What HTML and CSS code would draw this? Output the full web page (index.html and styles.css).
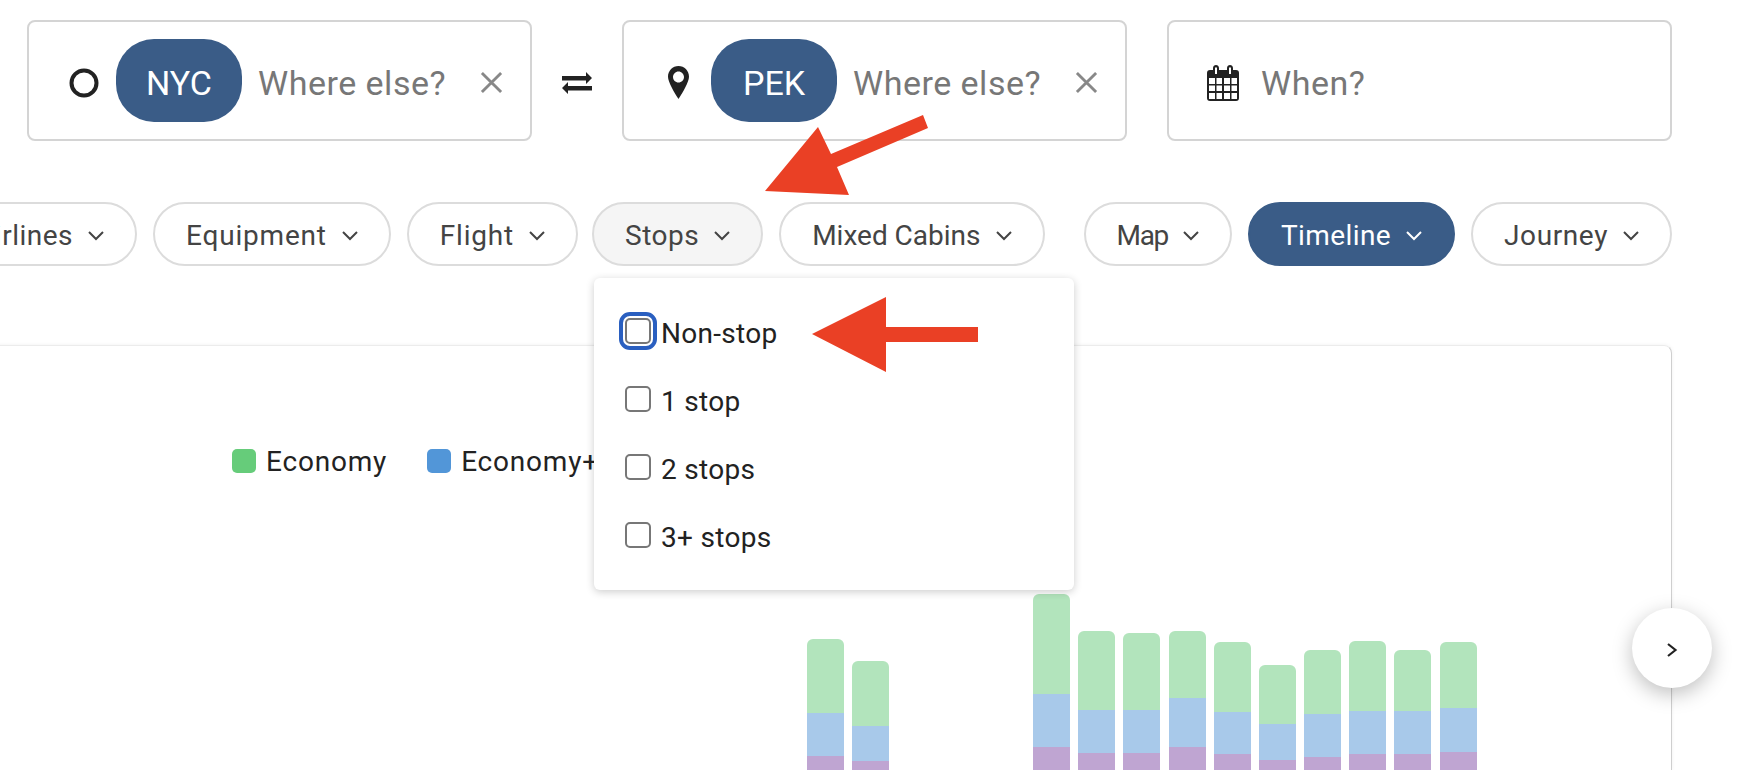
FILE: index.html
```html
<!DOCTYPE html>
<html lang="en">
<head>
    <meta charset="UTF-8">
    <title>Flight search</title>
    <link rel="stylesheet" href="styles.css">
</head>
<body>
    <div class="search-row">
        <div class="search-box">
            <svg class="icon-origin" viewBox="0 0 30 30"><circle cx="15" cy="15" r="12.5" fill="none" stroke="#222" stroke-width="4"/></svg>
            <span class="code-pill">NYC</span>
            <span class="placeholder">Where else?</span>
            <svg class="icon-close" viewBox="0 0 24 24"><path d="M2 2L22 22M22 2L2 22" stroke="#888" stroke-width="3" fill="none"/></svg>
        </div>
        <svg class="icon-swap" viewBox="0 0 30 24"><path d="M0 5H24V1L30 7L24 13V9.500H0ZM30 15H6V11L0 17L6 23V19.500H30Z" fill="#222"/></svg>
        <div class="search-box search-box-dest">
            <svg class="icon-pin" viewBox="0 0 21 33"><path fill-rule="evenodd" d="M10.500 0C4.700 0 0 4.700 0 10.700C0 15.800 6.500 27 10.500 33C14.500 27 21 15.800 21 10.700C21 4.700 16.300 0 10.500 0ZM10.500 5.500C13.500 5.500 16 8 16 11C16 14 13.500 16.500 10.500 16.500C7.500 16.500 5 14 5 11C5 8 7.500 5.500 10.500 5.500Z" fill="#222"/></svg>
            <span class="code-pill">PEK</span>
            <span class="placeholder">Where else?</span>
            <svg class="icon-close" viewBox="0 0 24 24"><path d="M2 2L22 22M22 2L2 22" stroke="#888" stroke-width="3" fill="none"/></svg>
        </div>
        <div class="search-box search-box-date">
            <svg class="icon-calendar" viewBox="0 0 32 36"><path fill-rule="evenodd" d="M6 3C6 1 7.500 0 9 0C10.500 0 12 1 12 3V5H20V3C20 1 21.500 0 23 0C24.500 0 26 1 26 3V5H29C31 5 32 6 32 8V33C32 35 31 36 29 36H3C1 36 0 35 0 33V8C0 6 1 5 3 5H6ZM8 2.500V9H10V2.500ZM22 2.500V9H24V2.500ZM2 13V19H8V13ZM9.500 13V19H15V13ZM17 13V19H23V13ZM24.500 13V19H30V13ZM2 20.500V26H8V20.500ZM9.500 20.500V26H15V20.500ZM17 20.500V26H23V20.500ZM24.500 20.500V26H30V20.500ZM2 28V34H8V28ZM9.500 28V34H15V28ZM17 28V34H23V28ZM24.500 28V34H30V28Z" fill="#222"/></svg>
            <span class="placeholder">When?</span>
        </div>
    </div>

    <div class="filter-row">
        <button class="filter-pill">Airlines <svg class="chevron" viewBox="0 0 18 11"><path d="M2 2L9 9L16 2" fill="none" stroke="currentColor" stroke-width="2"/></svg></button>
        <button class="filter-pill filter-pill-loose">Equipment <svg class="chevron" viewBox="0 0 18 11"><path d="M2 2L9 9L16 2" fill="none" stroke="currentColor" stroke-width="2"/></svg></button>
        <button class="filter-pill filter-pill-loose">Flight <svg class="chevron" viewBox="0 0 18 11"><path d="M2 2L9 9L16 2" fill="none" stroke="currentColor" stroke-width="2"/></svg></button>
        <div class="filter-wrap">
            <button class="filter-pill filter-pill-open">Stops <svg class="chevron" viewBox="0 0 18 11"><path d="M2 2L9 9L16 2" fill="none" stroke="currentColor" stroke-width="2"/></svg></button>
            <div class="stops-menu">
                <label class="stops-option"><input type="checkbox" class="stops-check stops-check-focus"> Non-stop</label>
                <label class="stops-option"><input type="checkbox" class="stops-check"> 1 stop</label>
                <label class="stops-option"><input type="checkbox" class="stops-check"> 2 stops</label>
                <label class="stops-option"><input type="checkbox" class="stops-check"> 3+ stops</label>
            </div>
        </div>
        <button class="filter-pill filter-pill-tight">Mixed Cabins <svg class="chevron" viewBox="0 0 18 11"><path d="M2 2L9 9L16 2" fill="none" stroke="currentColor" stroke-width="2"/></svg></button>
        <button class="filter-pill filter-pill-map">Map <svg class="chevron" viewBox="0 0 18 11"><path d="M2 2L9 9L16 2" fill="none" stroke="currentColor" stroke-width="2"/></svg></button>
        <button class="filter-pill filter-pill-active">Timeline <svg class="chevron" viewBox="0 0 18 11"><path d="M2 2L9 9L16 2" fill="none" stroke="currentColor" stroke-width="2"/></svg></button>
        <button class="filter-pill filter-pill-journey">Journey <svg class="chevron" viewBox="0 0 18 11"><path d="M2 2L9 9L16 2" fill="none" stroke="currentColor" stroke-width="2"/></svg></button>
    </div>

    <div class="chart-card">
        <div class="legend">
            <span class="legend-item"><i class="swatch swatch-economy"></i>Economy</span>
            <span class="legend-item"><i class="swatch swatch-plus"></i>Economy+</span>
        </div>
        <div class="chart">
            <div class="bar"><div class="seg-green" style="height:74px"></div><div class="seg-blue" style="height:43px"></div><div class="seg-purple" style="height:34px"></div></div>
            <div class="bar"><div class="seg-green" style="height:65px"></div><div class="seg-blue" style="height:35px"></div><div class="seg-purple" style="height:29px"></div></div>
            <div class="bar bar-empty"></div>
            <div class="bar bar-empty"></div>
            <div class="bar bar-empty"></div>
            <div class="bar"><div class="seg-green" style="height:100px"></div><div class="seg-blue" style="height:53px"></div><div class="seg-purple" style="height:43px"></div></div>
            <div class="bar"><div class="seg-green" style="height:79px"></div><div class="seg-blue" style="height:43px"></div><div class="seg-purple" style="height:37px"></div></div>
            <div class="bar"><div class="seg-green" style="height:77px"></div><div class="seg-blue" style="height:43px"></div><div class="seg-purple" style="height:37px"></div></div>
            <div class="bar"><div class="seg-green" style="height:67px"></div><div class="seg-blue" style="height:49px"></div><div class="seg-purple" style="height:43px"></div></div>
            <div class="bar"><div class="seg-green" style="height:70px"></div><div class="seg-blue" style="height:42px"></div><div class="seg-purple" style="height:36px"></div></div>
            <div class="bar"><div class="seg-green" style="height:59px"></div><div class="seg-blue" style="height:36px"></div><div class="seg-purple" style="height:30px"></div></div>
            <div class="bar"><div class="seg-green" style="height:64px"></div><div class="seg-blue" style="height:43px"></div><div class="seg-purple" style="height:33px"></div></div>
            <div class="bar"><div class="seg-green" style="height:70px"></div><div class="seg-blue" style="height:43px"></div><div class="seg-purple" style="height:36px"></div></div>
            <div class="bar"><div class="seg-green" style="height:61px"></div><div class="seg-blue" style="height:43px"></div><div class="seg-purple" style="height:36px"></div></div>
            <div class="bar"><div class="seg-green" style="height:66px"></div><div class="seg-blue" style="height:44px"></div><div class="seg-purple" style="height:38px"></div></div>
        </div>
        <button class="scroll-btn"><svg viewBox="0 0 12 16"><path d="M2 2L9.500 8L2 14" fill="none" stroke="#222" stroke-width="2.200"/></svg></button>
    </div>

    <!-- red annotation arrows drawn on top of the screenshot -->
    <svg class="annotations" viewBox="0 0 1748 770">
        <polygon fill="#ea4025" points="923,115 928,128 837,167 849,195 765,191 818,127 831,154"/>
        <polygon fill="#ea4025" points="812,334 886,297 886,327 978,327 978,342 886,342 886,372"/>
    </svg>
</body>
</html>
```

FILE: styles.css
```css
/* General Styles */
body {
    font-family: Roboto, "Liberation Sans", sans-serif;
    margin: 0;
    padding-top: 20px;
    height: 750px;
    overflow: hidden;
    position: relative;
    background: #fff;
    color: #222;
}

/* Search Row */
.search-row {
    display: flex;
    align-items: center;
    margin-left: 27px;
}

.search-box {
    box-sizing: border-box;
    width: 505px;
    height: 121px;
    display: flex;
    align-items: center;
    padding: 4px 0 0 40px;
    border: 2px solid #d4d4d4;
    border-radius: 8px;
    flex: none;
}

.search-box-dest {
    padding-left: 44px;
}

.search-box-date {
    margin-left: 40px;
    padding-left: 38px;
}

.icon-origin {
    width: 30px;
    height: 30px;
    flex: none;
}

.icon-pin {
    width: 21px;
    height: 33px;
    flex: none;
    margin-right: 1px;
}

.icon-calendar {
    width: 32px;
    height: 36px;
    flex: none;
    margin-right: 22px;
}

.icon-swap {
    width: 30px;
    height: 24px;
    flex: none;
    margin: 5px 30px 0;
}

.icon-close {
    width: 23px;
    height: 23px;
    flex: none;
    margin-left: 34px;
}

.code-pill {
    box-sizing: border-box;
    width: 126px;
    height: 83px;
    margin: -4px 16px 0 17px;
    padding-top: 4px;
    border-radius: 38px;
    background: #3a5c87;
    color: #fff;
    font-size: 34px;
    display: flex;
    align-items: center;
    justify-content: center;
    flex: none;
}

.search-box-dest .code-pill {
    margin-left: 21px;
}

.placeholder {
    font-size: 34px;
    letter-spacing: 0.5px;
    color: #777;
    white-space: nowrap;
}

/* Filter Row */
.filter-row {
    display: flex;
    justify-content: flex-end;
    gap: 16px;
    margin-top: 61px;
    margin-right: 76px;
}

.filter-wrap {
    position: relative;
    flex: none;
    margin-left: -2px;
}

.filter-pill {
    box-sizing: border-box;
    height: 64px;
    padding: 2px 30px 0 31px;
    display: flex;
    align-items: center;
    gap: 14px;
    border: 2px solid #dcdcdc;
    border-radius: 32px;
    background: #fff;
    color: #444;
    font-family: inherit;
    font-size: 28px;
    letter-spacing: 0.5px;
    white-space: nowrap;
    flex: none;
}

.filter-pill-loose {
    letter-spacing: 0.8px;
}

.filter-pill-tight {
    letter-spacing: 0;
}

.filter-pill-open {
    background: #f5f5f5;
}

.filter-pill-map {
    margin-left: 23px;
    letter-spacing: -1.3px;
}

.filter-pill-active {
    background: #3a5c87;
    border-color: #3a5c87;
    color: #fff;
    letter-spacing: 0.4px;
}

.filter-pill-journey {
    letter-spacing: 0.6px;
}

.chevron {
    width: 18px;
    height: 11px;
    flex: none;
}

/* Stops dropdown */
.stops-menu {
    position: absolute;
    top: 76px;
    left: 2px;
    z-index: 5;
    box-sizing: border-box;
    width: 480px;
    height: 312px;
    padding: 21px 31px;
    background: #fff;
    border-radius: 6px;
    box-shadow: 0 2px 8px rgba(0, 0, 0, 0.2);
}

.stops-option {
    display: flex;
    align-items: center;
    height: 68px;
    gap: 10px;
    font-size: 28px;
    letter-spacing: 0.3px;
    color: #222;
    white-space: nowrap;
}

.stops-check {
    appearance: none;
    box-sizing: border-box;
    width: 26px;
    height: 26px;
    margin: 0 0 4px;
    border: 2px solid #777;
    border-radius: 5px;
    background: #fff;
    flex: none;
}

.stops-check-focus {
    outline: 4px solid #2a5fc0;
    outline-offset: 2px;
}

/* Chart Card */
.chart-card {
    position: relative;
    margin: 79px 76px 0 -20px;
    height: 425px;
    box-sizing: border-box;
    border: 1px solid #ececec;
    border-right-color: #cfcfcf;
    border-bottom: none;
    border-radius: 8px 8px 0 0;
    box-shadow: 0 0 4px rgba(0, 0, 0, 0.06);
}

.legend {
    display: flex;
    gap: 40px;
    padding: 103px 0 0 251px;
    font-size: 28px;
    letter-spacing: 0.8px;
    height: 24px;
    align-items: center;
}

.legend-item {
    display: flex;
    align-items: center;
    gap: 10px;
    white-space: nowrap;
}

.swatch {
    width: 24px;
    height: 24px;
    border-radius: 5px;
}

.swatch-economy {
    background: #66cc7a;
}

.swatch-plus {
    background: #5296d8;
}

.chart {
    display: flex;
    align-items: flex-end;
    gap: 8.2px;
    height: 176px;
    margin-top: 121px;
    padding-left: 826px;
    overflow: hidden;
}

/* bars run on below the fold */
.bar {
    width: 37px;
    flex: none;
    margin-bottom: -20px;
    border-radius: 6px 6px 0 0;
    overflow: hidden;
}

.seg-green {
    background: #b2e4bc;
}

.seg-blue {
    background: #a8c9ea;
}

.seg-purple {
    background: #bfa5d2;
}

.scroll-btn {
    position: absolute;
    top: 262px;
    right: -41px;
    width: 80px;
    height: 80px;
    padding: 0;
    border: none;
    border-radius: 50%;
    background: #fff;
    box-shadow: 0 6px 20px rgba(0, 0, 0, 0.25);
    display: flex;
    align-items: center;
    justify-content: center;
}

.scroll-btn svg {
    width: 12px;
    height: 16px;
    margin-top: 4px;
}

.annotations {
    position: absolute;
    top: 0;
    left: 0;
    width: 1748px;
    height: 770px;
    z-index: 10;
    pointer-events: none;
}
```
